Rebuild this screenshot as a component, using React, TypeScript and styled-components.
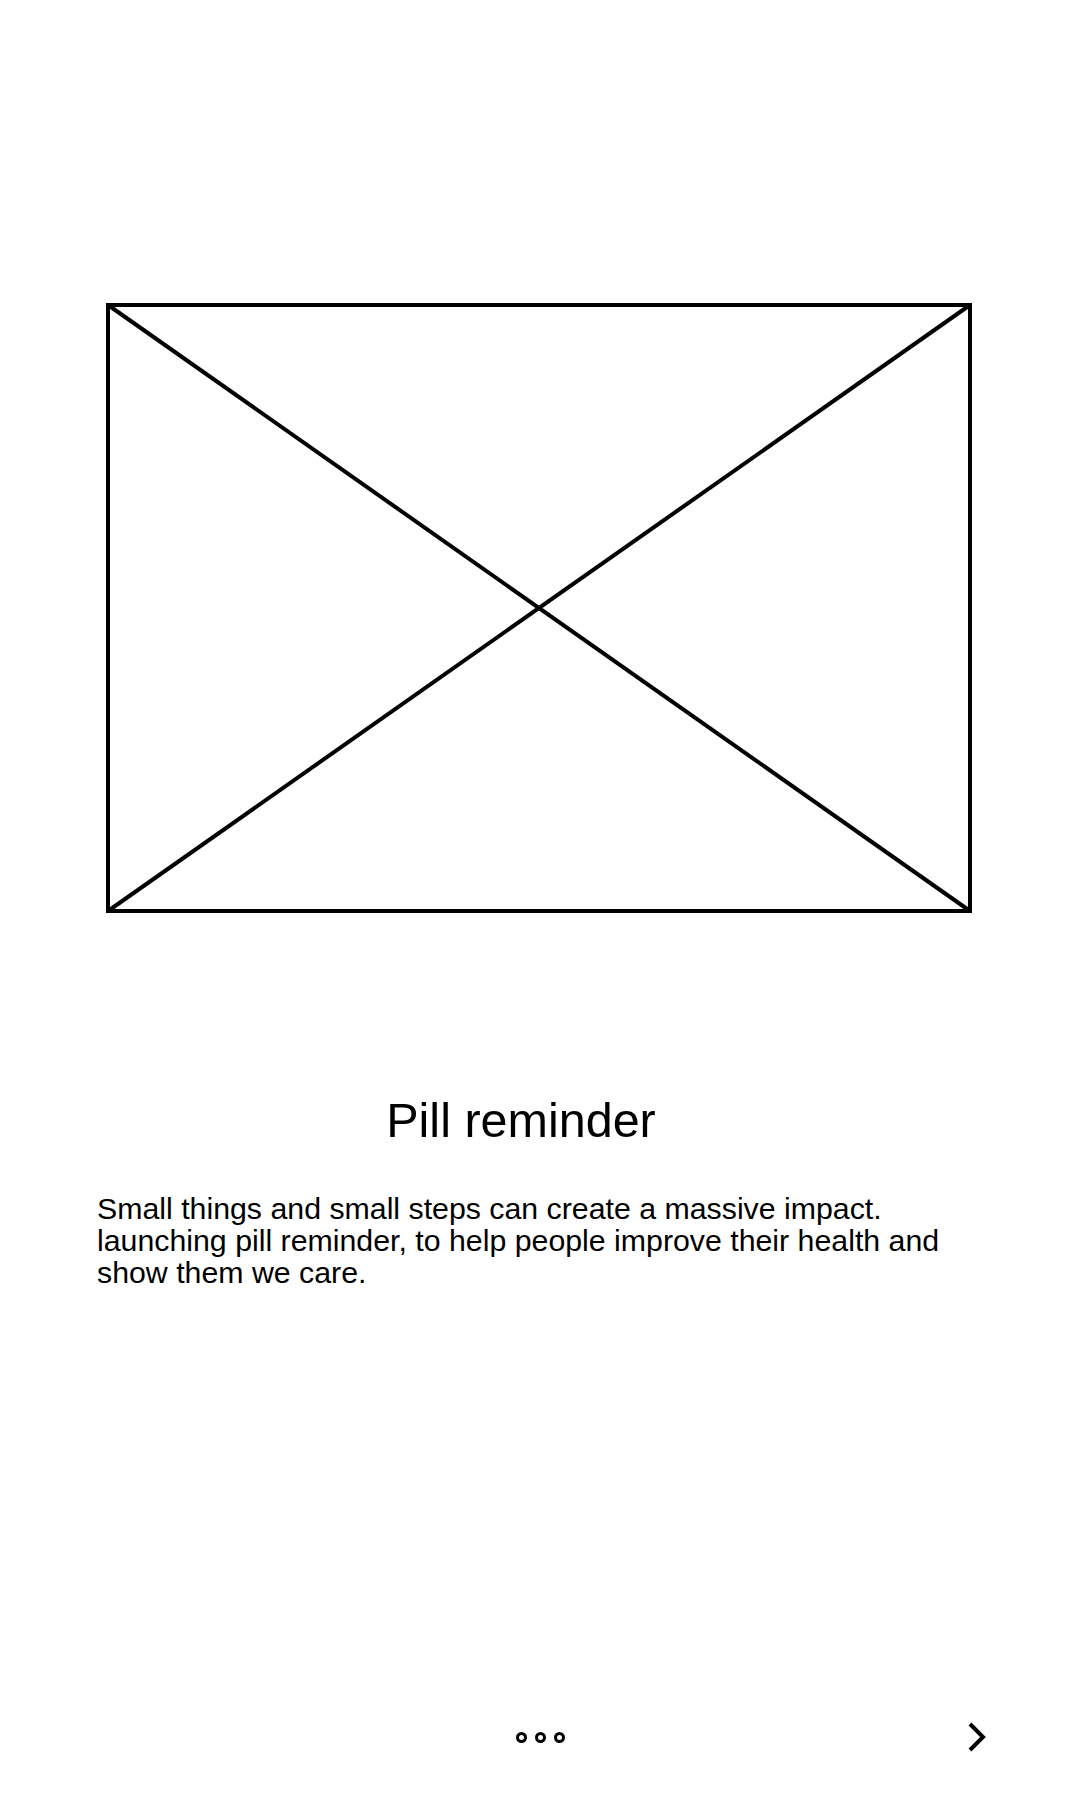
import { createGlobalStyle, styled } from 'styled-components';

const GlobalStyle = createGlobalStyle`
  html, body {
    margin: 0;
    padding: 0;
    background: #fff;
  }
  body {
    font-family: "Liberation Sans", Arial, sans-serif;
    color: #000;
  }
`;

const Page = styled.div`
  width: 1080px;
  min-height: 1800px;
  display: flex;
  flex-direction: column;
  box-sizing: border-box;
  padding-top: 303px;
`;

const Placeholder = styled.svg`
  display: block;
  margin-left: 106px;
`;

const Title = styled.h1`
  margin: 179px 0 0;
  padding-right: 38px;
  font-size: 48.5px;
  line-height: 56px;
  font-weight: 400;
  text-align: center;
`;

const Desc = styled.p`
  margin: 45px 0 0;
  padding-left: 97px;
  width: 880px;
  font-size: 30.3px;
  line-height: 32px;
`;

const Footer = styled.div`
  margin-top: auto;
  margin-bottom: 43px;
  height: 40px;
  display: grid;
  grid-template-columns: 1fr auto 1fr;
  align-items: center;
`;

const Dots = styled.div`
  display: flex;
  gap: 8px;
`;

const Dot = styled.span`
  width: 11px;
  height: 11px;
  box-sizing: border-box;
  border: 3px solid #000;
  border-radius: 50%;
`;

const NextButton = styled.button`
  justify-self: end;
  margin-right: 93px;
  padding: 0;
  border: none;
  background: none;
  cursor: pointer;
  display: flex;
`;

const App = () => {
  return (
    <>
      <GlobalStyle />
      <Page>
        <Placeholder width="866" height="610" viewBox="0 0 866 610">
          <rect x="2" y="2" width="862" height="606" fill="none" stroke="#000" strokeWidth="4" />
          <line x1="2" y1="2" x2="864" y2="608" stroke="#000" strokeWidth="4" />
          <line x1="864" y1="2" x2="2" y2="608" stroke="#000" strokeWidth="4" />
        </Placeholder>

        <Title>Pill reminder</Title>
        <Desc>
          Small things and small steps can create a massive impact.
          <br />
          launching pill reminder, to help people improve their health and show them we care.
        </Desc>

        <Footer>
          <span />
          <Dots>
            <Dot />
            <Dot />
            <Dot />
          </Dots>
          <NextButton aria-label="Next">
            <svg width="20" height="34" viewBox="0 0 20 34">
              <polyline points="3,4 16,17 3,30" fill="none" stroke="#000" strokeWidth="4" />
            </svg>
          </NextButton>
        </Footer>
      </Page>
    </>
  );
};

export default App;
